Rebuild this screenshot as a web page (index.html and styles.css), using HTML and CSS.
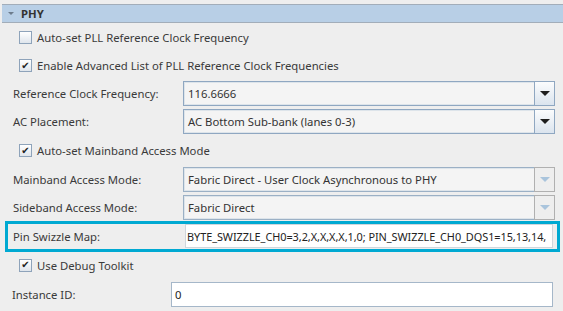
FILE: index.html
```html
<!DOCTYPE html>
<html>
<head>
<meta charset="utf-8">
<link rel="stylesheet" href="styles.css">
</head>
<body>
<div class="panel">
  <div class="header"><span class="tri"></span><span class="title">PHY</span></div>
  <div class="row h28 cbrow"><span class="cb"></span><span>Auto-set PLL Reference Clock Frequency</span></div>
  <div class="row h29 cbrow"><span class="cb"><span class="tick">&#10004;</span></span><span>Enable Advanced List of PLL Reference Clock Frequencies</span></div>
  <div class="row h27"><span class="label">Reference Clock Frequency:</span>
    <div class="combo"><span class="val">116.6666</span><span class="btn"><span class="arrow"></span></span></div></div>
  <div class="row h29"><span class="label">AC Placement:</span>
    <div class="combo"><span class="val">AC Bottom Sub-bank (lanes 0-3)</span><span class="btn"><span class="arrow"></span></span></div></div>
  <div class="row h29 cbrow"><span class="cb"><span class="tick">&#10004;</span></span><span>Auto-set Mainband Access Mode</span></div>
  <div class="row h28"><span class="label">Mainband Access Mode:</span>
    <div class="combo dis"><span class="val">Fabric Direct - User Clock Asynchronous to PHY</span><span class="btn"><span class="arrow"></span></span></div></div>
  <div class="row h28"><span class="label">Sideband Access Mode:</span>
    <div class="combo dis"><span class="val">Fabric Direct</span><span class="btn"><span class="arrow"></span></span></div></div>
  <div class="row h30">
    <div class="hl"><span class="label">Pin Swizzle Map:</span>
      <div class="field sw">BYTE_SWIZZLE_CH0=3,2,X,X,X,X,1,0; PIN_SWIZZLE_CH0_DQS1=15,13,14,</div></div>
  </div>
  <div class="row h28 cbrow"><span class="cb"><span class="tick">&#10004;</span></span><span>Use Debug Toolkit</span></div>
  <div class="row h30"><span class="label id">Instance ID:</span><div class="field inst">0</div></div>
</div>
</body>
</html>
```
FILE: styles.css
```css
html, body { margin: 0; padding: 0; background: #eeeeee; }
body { font-family: "Noto Sans", "Open Sans", sans-serif; font-size: 11.3px; color: #3a3a3a; width: 563px; height: 311px; overflow: hidden; }
.panel { padding: 4px 0 0 2px; }
.header { height: 17px; background: #b8cfe6; border-top: 1px solid #a2adb9; border-bottom: 1px solid #a2adb9; display: flex; align-items: center; }
.tri { width: 0; height: 0; border-left: 3px solid transparent; border-right: 3px solid transparent; border-top: 3px solid #6d7c8c; margin: 0 7px 0 6px; }
.title { font-weight: bold; font-size: 11.3px; color: #333; }
.row { display: flex; align-items: center; box-sizing: border-box; }
.h27 { height: 27px; } .h28 { height: 28px; } .h29 { height: 29px; } .h30 { height: 30px; }
.cbrow { padding-left: 17px; }
.cb { width: 11px; height: 11px; border: 1px solid #8ea3ba; background: linear-gradient(#ffffff, #dfe5ec); margin-right: 5px; display: flex; align-items: center; justify-content: center; }
.tick { font-size: 10px; line-height: 10px; color: #222; font-family: "DejaVu Sans", sans-serif; }
.label { width: 170px; padding-left: 11px; flex: none; }
.combo { width: 372px; height: 25px; box-sizing: border-box; border: 1px solid #8fa7c1; display: flex; background: #f4f4f4; }
.combo .val { flex: 1; border: 1px solid #dde4ea; border-right: none; padding-left: 3px; display: flex; align-items: center; color: #333; }
.combo .btn { width: 19px; border-left: 1px solid #8fa7c1; background: linear-gradient(#fbfcfd, #dbe4ee); display: flex; align-items: center; justify-content: center; }
.arrow { width: 0; height: 0; border-left: 5px solid transparent; border-right: 5px solid transparent; border-top: 5px solid #1e1e1e; }
.combo.dis { border-color: #9bb0c5; }
.combo.dis .btn { background: #eeeeee; border: 1px solid #b0b0b0; margin: -1px -1px -1px 0; }
.combo.dis .arrow { border-top-color: #a9c4dc; }
.hl { margin-left: 3px; width: 555px; height: 31px; box-sizing: border-box; border: 3px solid #00a9d2; display: flex; align-items: center; }
.hl .label { width: 172px; padding-left: 5px; }
.field { height: 24px; box-sizing: border-box; border: 1px solid #9db2c7; background: #fff; display: flex; align-items: center; padding-left: 3px; color: #222; white-space: nowrap; overflow: hidden; }
.sw { width: 368px; border-color: #cfd6dc; padding-left: 1px; font-size: 10.9px; letter-spacing: -0.05px; }
.inst { width: 382px; height: 25px; border-color: #a5b7c9; }
.label.id { width: 159px; padding-left: 10px; }
```
